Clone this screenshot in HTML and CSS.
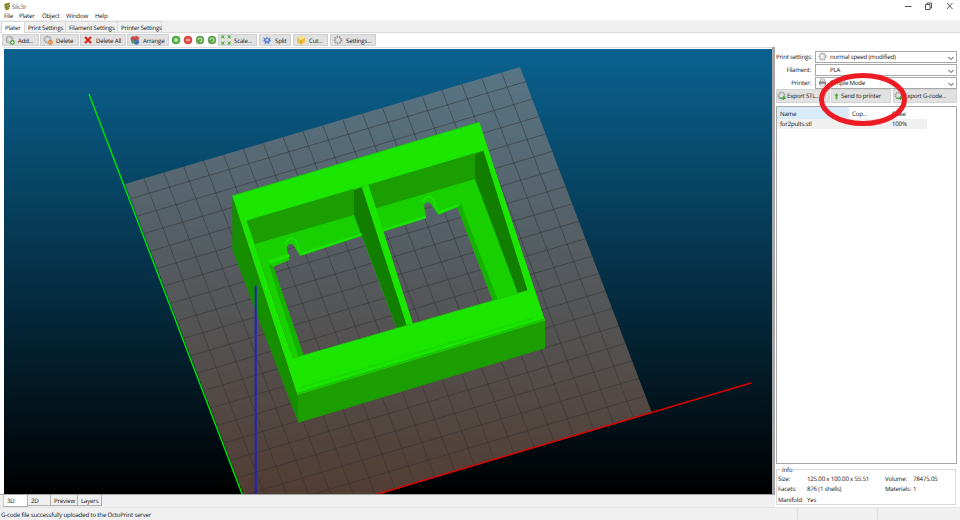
FILE: index.html
```html
<!DOCTYPE html>
<html lang="en">
<head>
<meta charset="utf-8">
<title>Slic3r</title>
<link rel="stylesheet" href="styles.css">
</head>
<body>
<svg class="defs" width="0" height="0" aria-hidden="true">
  <symbol id="i-gear" viewBox="0 0 10 10"><circle cx="5" cy="5" r="3.4" fill="none" stroke="#9a9a9a" stroke-width="2" stroke-dasharray="1.4 .7"/><circle cx="5" cy="5" r="2.6" fill="none" stroke="#c4c4c4" stroke-width="1"/></symbol>
  <symbol id="i-add" viewBox="0 0 10 10"><use href="#i-gear" width="9" height="9"/><circle cx="7.4" cy="7.4" r="2.3" fill="#3fa535"/><path d="M6 7.4h2.8M7.4 6v2.8" stroke="#fff" stroke-width=".7"/></symbol>
  <symbol id="i-del" viewBox="0 0 10 10"><use href="#i-gear" width="9" height="9"/><circle cx="7.4" cy="7.4" r="2.3" fill="#e8782a"/><path d="M6 7.4h2.8" stroke="#fff" stroke-width=".8"/></symbol>
  <symbol id="i-x" viewBox="0 0 10 10"><path d="M2 2l6 6M8 2l-6 6" stroke="#e2231a" stroke-width="2.2"/></symbol>
  <symbol id="i-arrange" viewBox="0 0 10 10"><circle cx="3.4" cy="4" r="2.8" fill="#c0504d"/><circle cx="6.6" cy="3.4" r="2.4" fill="#d24a43"/><circle cx="6.4" cy="7" r="2.7" fill="#4a70b8"/><circle cx="3" cy="7" r="1.8" fill="#5a9a55"/></symbol>
  <symbol id="i-plus" viewBox="0 0 10 10"><circle cx="5" cy="5" r="4" fill="#59b548" stroke="#3c8f34" stroke-width=".6"/><path d="M3 5h4M5 3v4" stroke="#e8f5e4" stroke-width="1.1"/></symbol>
  <symbol id="i-minus" viewBox="0 0 10 10"><circle cx="5" cy="5" r="4" fill="#e0524a" stroke="#b8362f" stroke-width=".6"/><path d="M3 5h4" stroke="#fbe6e4" stroke-width="1.1"/></symbol>
  <symbol id="i-rot" viewBox="0 0 10 10"><circle cx="5" cy="5" r="3.9" fill="#63a84f" stroke="#3f8434" stroke-width=".6"/><path d="M3 5a2 2 0 1 1 2 2" fill="none" stroke="#d4ecc9" stroke-width="1"/></symbol>
  <symbol id="i-scale" viewBox="0 0 10 10"><path d="M.5.5h3.4L.5 3.9zM9.5.5H6.1l3.4 3.4zM.5 9.5h3.4L.5 6.1zM9.5 9.5H6.1l3.4-3.4z" fill="#4fae3e"/><path d="M1.5 1.5l2 2M8.5 1.5l-2 2M1.5 8.5l2-2M8.5 8.5l-2-2" stroke="#4fae3e"/></symbol>
  <symbol id="i-split" viewBox="0 0 10 10"><path d="M5 1.5l1.2 2 2.6-1-1 2.5 1.7 1-2.4.7.2 2.8-2.3-1.7-2.3 1.7.2-2.8L.5 6l1.7-1-1-2.5 2.6 1z" fill="#5b7fd6"/><circle cx="5" cy="5" r="1.3" fill="#c9d6f5"/></symbol>
  <symbol id="i-cut" viewBox="0 0 10 10"><path d="M5 .8l4 2.2v4.4L5 9.4 1 7.4V3z" fill="#f0c040"/><path d="M1 3l4 2.2L9 3M5 5.2v4.2" fill="none" stroke="#c8922a" stroke-width=".6"/><path d="M5 .8l4 2.2-4 2.2L1 3z" fill="#f8e08a"/></symbol>
  <symbol id="i-set" viewBox="0 0 10 10"><circle cx="5" cy="5" r="3.3" fill="none" stroke="#9c9c9c" stroke-width="2.2" stroke-dasharray="1.5 .8"/><circle cx="5" cy="5" r="1.1" fill="#e6e6e6"/></symbol>
  <symbol id="i-export" viewBox="0 0 10 10"><use href="#i-gear" width="9" height="9"/><path d="M2.5 6.5H6V4.8L9.5 7 6 9.2V7.8H2.5z" fill="#45a83a"/></symbol>
  <symbol id="i-up" viewBox="0 0 10 10"><path d="M5 .8L8 4.6H6.3v4.9H3.700V4.600H2z" fill="#4fae3e"/></symbol>
  <symbol id="i-printer" viewBox="0 0 10 10"><rect x="1" y="3.5" width="8" height="4" fill="#8d8d8d"/><rect x="2.5" y="1" width="5" height="3" fill="#d8d8d8" stroke="#888" stroke-width=".4"/><rect x="2.5" y="6.5" width="5" height="2.5" fill="#ededed" stroke="#888" stroke-width=".4"/></symbol>
  <symbol id="i-chev" viewBox="0 0 8 8"><path d="M1.5 3L4 5.5 6.5 3" fill="none" stroke="#444" stroke-width="1"/></symbol>
</svg>

<div class="app">
  <header class="titlebar">
    <div class="title">
      <svg class="logo" viewBox="0 0 9 10"><path d="M1 2.5L6.5.5 8 2 2 4.3zM1.500 5L7.800 3 8 5 2 7zM2 7.600L7.500 5.800 7 8 3.500 9.500z" fill="#8a8c1e"/><path d="M2 4.300L8 2M2 7l6-2" stroke="#3f4a12" stroke-width=".6"/></svg>
      <span>Slic3r</span>
    </div>
    <div class="winctl">
      <svg viewBox="0 0 60 10" width="60" height="10"><path d="M7 5.500h6.500" stroke="#555"/><path d="M27.500 3.500h4.500v5h-4.500zM29 3.500V2h4.500v5H32" fill="none" stroke="#555"/><path d="M49 2l5.500 6M54.500 2L49 8" stroke="#555"/></svg>
    </div>
  </header>
  <nav class="menubar">
    <span class="menu m-file">File</span><span class="menu m-plater">Plater</span><span class="menu m-object">Object</span><span class="menu m-window">Window</span><span class="menu">Help</span>
  </nav>
  <div class="tabs">
    <span class="tab active t-plater">Plater</span>
    <span class="tab t-print">Print Settings</span>
    <span class="tab t-fil">Filament Settings</span>
    <span class="tab t-printer">Printer Settings</span>
  </div>
  <div class="toolbar">
    <button class="tb b-add"><svg class="ic"><use href="#i-add"/></svg>Add...</button>
    <button class="tb b-delete"><svg class="ic"><use href="#i-del"/></svg>Delete</button>
    <button class="tb b-delall"><svg class="ic"><use href="#i-x"/></svg>Delete All</button>
    <button class="tb b-arrange"><svg class="ic"><use href="#i-arrange"/></svg>Arrange</button>
    <span class="iconbtn"><svg class="ic"><use href="#i-plus"/></svg></span>
    <span class="iconbtn"><svg class="ic"><use href="#i-minus"/></svg></span>
    <span class="iconbtn"><svg class="ic"><use href="#i-rot"/></svg></span>
    <span class="iconbtn"><svg class="ic"><use href="#i-rot"/></svg></span>
    <button class="tb b-scale"><svg class="ic"><use href="#i-scale"/></svg>Scale...</button>
    <button class="tb b-split"><svg class="ic"><use href="#i-split"/></svg>Split</button>
    <button class="tb b-cut"><svg class="ic"><use href="#i-cut"/></svg>Cut...</button>
    <button class="tb b-settings"><svg class="ic"><use href="#i-set"/></svg>Settings...</button>
  </div>

  <main class="main">
    <section class="left">
      <div class="canvas">
        <svg class="scene" viewBox="4 49 768 445" width="768" height="445">
          <polygon class="bed" points="125,184 520,67 652,413 257,530"/>
          <path class="grid" d="M144 178.4l132 346m-112.13-351.88l132 346m-112.13-351.88l132 346m-112.13-351.88l132 346m-112.13-351.88l132 346m-112.13-351.88l132 346m-112.13-351.88l132 346m-112.13-351.88l132 346m-112.13-351.88l132 346m-112.13-351.88l132 346m-112.13-351.88l132 346m-112.13-351.88l132 346m-112.13-351.88l132 346m-112.13-351.88l132 346m-112.13-351.88l132 346m-112.13-351.88l132 346m-112.13-351.88l132 346m-112.13-351.88l132 346m-112.13-351.88l132 346"/>
          <path class="grid" d="M130.6 198.7l395-117m-388.35 134.45l395-117m-388.35 134.45l395-117m-388.35 134.45l395-117m-388.35 134.45l395-117m-388.35 134.45l395-117m-388.35 134.45l395-117m-388.35 134.45l395-117m-388.35 134.45l395-117m-388.35 134.45l395-117m-388.35 134.45l395-117m-388.35 134.45l395-117m-388.35 134.45l395-117m-388.35 134.45l395-117m-388.35 134.45l395-117m-388.35 134.45l395-117m-388.35 134.45l395-117m-388.35 134.45l395-117m-388.35 134.45l395-117"/>
          <line class="axis-g" x1="89" y1="94" x2="257" y2="533"/>
          <line class="axis-r" x1="751" y1="383" x2="257" y2="530"/>
          <g transform="translate(220 110) scale(.33333)">
            <polygon class="wall-l" points="37,258 37,420 235,938 232,855"/>
            <polygon class="wall" points="232,855 235,938 975,715 975,632"/>
            <path class="rim" fill-rule="evenodd" d="M37 258L778 37 975 632 232 855ZM80 332L790 122 922 542 218 745Z"/>
            <path class="floor" fill-rule="evenodd" d="M80 332L790 122 922 542 218 745ZM160 470L208 450 200 412Q212 392 222 408L240 438 425 378 530 654 250 735ZM490 365L618 325 612 285Q624 268 634 284L655 314 712 292 818 571 578 640Z"/>
            <polygon class="wall" points="80,332 402,237 402,315 105,402"/>
            <polygon class="wall" points="445,225 790,122 765,135 765,207 468,295"/>
            <polygon class="wall-d" points="402,240 428,231 560,645 530,654 402,315"/>
            <polygon class="wall-d" points="765,135 790,122 922,540 893,548 765,207"/>
            <polygon class="rim" points="425,230 445,224 578,640 560,645"/>
            <polygon class="strip" points="145,460 160,470 250,735 235,740"/>
            <polygon class="strip" points="712,292 722,280 832,567 818,571"/>
            <polygon class="rim" points="140,452 208,432 208,441 152,460"/>
            <polygon class="rim" points="245,428 425,370 425,376 245,436"/>
            <polygon class="rim" points="655,304 722,280 712,290 655,312"/>
            <polygon class="rim" points="490,358 618,316 618,324 490,364"/>
            <path class="lip" d="M194 405Q208 374 228 392L240 425"/>
            <path class="lip" d="M608 276Q622 250 640 268L652 300"/>
            <path class="bevel" d="M232 851L975 628"/>
            <path class="shine" d="M238 834L940 624"/>
            <path class="edge" d="M37 258L778 37"/>
          </g>
          <line class="axis-b" x1="255.7" y1="286" x2="255.7" y2="494"/>
        </svg>
      </div>
      <div class="viewtabs">
        <span class="vt active v-3d">3D</span><span class="vt v-2d">2D</span><span class="vt v-prev">Preview</span><span class="vt v-lay">Layers</span>
      </div>
    </section>

    <aside class="panel">
      <div class="formrow"><label>Print settings:</label><div class="select"><svg class="sic"><use href="#i-set"/></svg><span>normal speed (modified)</span><svg class="chev"><use href="#i-chev"/></svg></div></div>
      <div class="formrow"><label>Filament:</label><div class="select"><span class="sic"></span><span>PLA</span><svg class="chev"><use href="#i-chev"/></svg></div></div>
      <div class="formrow"><label>Printer:</label><div class="select"><svg class="sic"><use href="#i-printer"/></svg><span>Simple Mode</span><svg class="chev"><use href="#i-chev"/></svg></div></div>
      <div class="actions">
        <button class="ab a-stl"><svg class="ic"><use href="#i-export"/></svg>Export STL...</button>
        <button class="ab a-send"><svg class="ic"><use href="#i-up"/></svg>Send to printer</button>
        <button class="ab a-gcode"><svg class="ic"><use href="#i-export"/></svg>Export G-code...</button>
      </div>
      <div class="list">
        <div class="lrow lhead"><span class="c-name sel">Name</span><span class="c-copies">Cop...</span><span class="c-scale">Scale</span></div>
        <div class="lrow litem"><span class="c-name">for2pults.stl</span><span class="c-copies"></span><span class="c-scale">100%</span></div>
      </div>
      <fieldset class="info">
        <legend>Info</legend>
        <div class="infogrid">
          <span>Size:</span><span>125.00 x 100.00 x 55.51</span><span>Volume:</span><span>78475.05</span>
          <span>Facets:</span><span>876 (1 shells)</span><span>Materials:</span><span>1</span>
          <span>Manifold:</span><span>Yes</span>
        </div>
      </fieldset>
    </aside>
  </main>

  <footer class="status">
    <span class="s-msg">G-code file successfully uploaded to the OctoPrint server</span><span class="s-mid"></span><span class="s-end"></span>
  </footer>

  <svg class="annot" viewBox="0 0 960 520" width="960" height="520" aria-hidden="true"><ellipse cx="863" cy="99.5" rx="41.5" ry="24" fill="none" stroke="#ed1c24" stroke-width="5"/></svg>
</div>
</body>
</html>
```

FILE: styles.css
```css
* { box-sizing: border-box; }
html, body { margin: 0; padding: 0; }
body {
  width: 960px; height: 520px; overflow: hidden; background: #fff;
  font-family: "Open Sans", "Noto Sans", sans-serif; font-size: 6.1px; letter-spacing: -.18px; color: #111;
  text-rendering: geometricPrecision; white-space: nowrap;
}
.defs { position: absolute; }
.app { position: relative; width: 960px; height: 520px; display: flex; flex-direction: column; }

.titlebar { height: 11px; display: flex; justify-content: space-between; align-items: flex-start; }
.title { display: flex; align-items: center; gap: 1px; padding: 2px 0 0 3px; color: #555; height: 11px; }
.logo { width: 8px; height: 9px; }
.winctl { padding-top: 1px; height: 11px; margin-right: 2px; line-height: 0; }

.menubar { height: 9px; display: flex; align-items: center; padding-left: 4px; }
.m-file { width: 15px; } .m-plater { width: 23px; } .m-object { width: 24px; } .m-window { width: 29px; }

.tabs { height: 13px; background: #f0f0f0; border-bottom: 1px solid #d9d9d9; display: flex; align-items: flex-end; padding-left: 1px; }
.tab { height: 11px; display: flex; align-items: center; padding-left: 3px; border: 1px solid #d9d9d9; border-bottom: 0; border-left: 0; }
.tab.active { background: #fff; height: 12px; margin-bottom: -1px; border-left: 1px solid #d9d9d9; }
.t-plater { width: 24px; } .t-print { width: 41px; } .t-fil { width: 52px; } .t-printer { width: 44px; }

.toolbar { height: 14px; display: flex; align-items: flex-start; padding: 1px 0 0 2px; }
.tb, .ab {
  font: inherit; letter-spacing: inherit; color: inherit; height: 12px; margin: 0; padding: 0 0 0 2px; display: flex; align-items: center; gap: 3px;
  background: #e1e1e1; border: 1px solid #d0d0d0; border-radius: 0; white-space: nowrap; text-rendering: geometricPrecision;
}
.ic { width: 10px; height: 10px; flex: none; }
.iconbtn { width: 12px; height: 12px; display: flex; align-items: center; justify-content: center; }
.b-add { width: 37px; margin-right: 1px; } .b-delete { width: 39px; margin-right: 1px; } .b-delall { width: 46px; margin-right: 1px; }
.b-arrange { width: 42px; margin-right: 1px; } .b-scale { width: 39px; margin-right: 2px; } .b-split { width: 32px; margin-right: 2px; }
.b-cut { width: 35px; margin-right: 2px; } .b-settings { width: 46px; }

.main { flex: 1; display: flex; min-height: 0; }
.left { width: 775px; display: flex; flex-direction: column; background: #f0f0f0; }
.canvas { flex: none; width: 775px; height: 448px; background: #fff; padding: 2px 0 0 4px; border-right: 3px solid #a6a6a6; border-bottom: 1px solid #a6a6a6; position: relative; }
.canvas::before { content: ""; position: absolute; left: 3px; right: 0; top: 0; height: 1px; background: #dcdcdc; }
.scene { display: block; overflow: hidden; background: linear-gradient(#0a6290, #000); }
.bed { fill: rgba(204,153,127,.4); }
.grid { fill: none; stroke: rgba(45,45,45,.48); stroke-width: 1; }
.axis-g { stroke: #00e000; stroke-width: 1.5; }
.axis-r { stroke: #e00000; stroke-width: 1.5; }
.axis-b { stroke: #2222c4; stroke-width: 2; }
.rim { fill: #1ae600; }
.floor { fill: #18d000; }
.wall { fill: #1a9e00; }
.wall-l { fill: #158f00; }
.wall-d { fill: #127e00; }
.strip { fill: #15b000; }
.lip { fill: none; stroke: #1ae600; stroke-width: 5; }
.bevel { fill: none; stroke: #18c400; stroke-width: 5; }
.shine { fill: none; stroke: #19d800; stroke-width: 4; }
.edge { fill: none; stroke: #18d000; stroke-width: 3; }

.viewtabs { flex: 1; display: flex; align-items: flex-start; padding-left: 3px; }
.vt { height: 11px; display: flex; align-items: center; padding-left: 3px; border: 1px solid #b0b0b0; border-top: 0; border-left: 0; background: #f0f0f0; }
.vt.active { background: #fff; height: 12px; border-left: 1px solid #c8c8c8; }
.v-3d { width: 25px; } .v-2d { width: 23px; } .v-prev { width: 27px; } .v-lay { width: 24px; }

.panel { flex: 1; padding: 4px 3px 0 1px; display: flex; flex-direction: column; }
.formrow { display: flex; height: 13px; align-items: flex-start; }
.formrow label { width: 35px; text-align: right; line-height: 12px; margin-right: 4px; }
.select { width: 142px; height: 11.5px; border: 1px solid #a8a8a8; display: flex; align-items: center; background: #fff; padding-left: 2px; position: relative; }
.sic { width: 9px; height: 9px; margin-right: 3px; flex: none; }
.chev { width: 8px; height: 8px; position: absolute; right: 1px; top: 1.5px; }

.actions { display: flex; gap: 1px; height: 14px; margin-top: -1px; }
.ab { height: 13.5px; border-color: #d4d4d4; gap: 0; padding-left: 0; }
.a-stl { width: 54px; } .a-send { width: 60px; padding-left: 1px; gap: 1px; } .a-gcode { width: 64px; margin-left: 1px; }
.a-send .ic { width: 7px; height: 8px; }

.list { margin-top: 3px; height: 358px; border: 1px solid #a8a8a8; width: 181px; }
.lrow { display: flex; height: 12px; align-items: center; }
.c-name { width: 72px; padding-left: 3px; height: 100%; display: flex; align-items: center; }
.c-copies { width: 22px; padding-left: 3px; height: 100%; display: flex; align-items: center; }
.c-scale { width: 55px; padding-left: 21px; height: 100%; display: flex; align-items: center; }
.sel { background: #d9ebf9; }
.litem { width: 150px; height: 9.5px; background: #f0f0f0; }

.info { margin: 2px 0 0; padding: 0 0 0 1px; border: 1px solid #d8d8d8; width: 180px; height: 39px; }
.info legend { padding: 0 1px; margin-left: 3px; line-height: 7px; }
.infogrid { display: grid; grid-template-columns: 29px 78px 28px 1fr; grid-auto-rows: 10.5px; align-items: center; }

.status { height: 13px; background: #f0f0f0; border-top: 1px solid #e4e4e4; display: flex; }
.status span { height: 100%; display: flex; align-items: center; }
.s-msg { width: 798px; padding-left: 1px; border-right: 1px solid #dcdcdc; }
.s-mid { width: 80px; border-right: 1px solid #dcdcdc; }

.annot { position: absolute; left: 0; top: 0; pointer-events: none; }
```
